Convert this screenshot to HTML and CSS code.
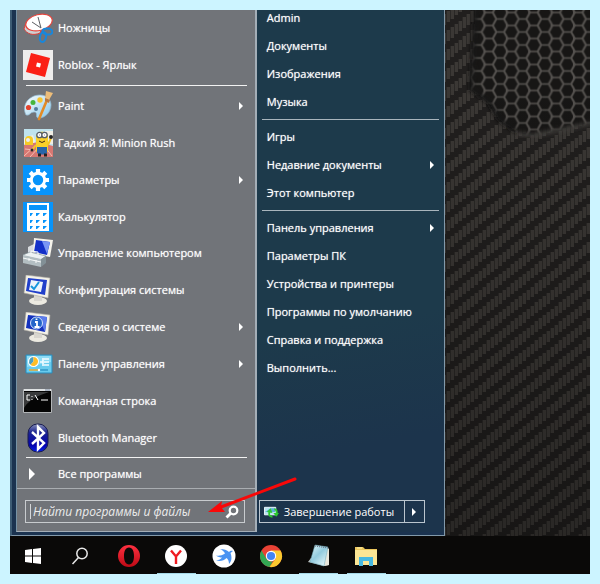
FILE: index.html
```html
<!DOCTYPE html>
<html lang="ru">
<head>
<meta charset="utf-8">
<title>Меню Пуск</title>
<link rel="stylesheet" href="styles.css">
</head>
<body>
<main class="desktop">
  <svg class="wallpaper" aria-hidden="true">
    <defs>
      <linearGradient id="strand"><stop offset="0" stop-color="#302e2c"/><stop offset=".6" stop-color="#403d3a"/><stop offset="1" stop-color="#2c2a28"/></linearGradient>
      <linearGradient id="dim" x2="0" y2="1"><stop offset=".1" stop-color="#000" stop-opacity="0"/><stop offset="1" stop-color="#000" stop-opacity=".32"/></linearGradient>
      <filter id="soft"><feGaussianBlur stdDeviation=".6"/></filter>
      <filter id="edge" x="-20%" y="-20%" width="140%" height="140%"><feGaussianBlur stdDeviation="2"/></filter>
      <pattern id="carbon" width="24" height="19" patternUnits="userSpaceOnUse">
        <path fill="#211f1e" d="M0 0h24v19H0z"/>
        <g fill="#3a3735" filter="url(#soft)">
          <path d="M0 4h4v11H0zM4 1h4v11H4zM8 -2h4v11H8zM8 17h4v11H8zM12 -5h4v10h-4zM12 14h4v11h-4zM16 -8h4v10h-4zM16 11h4v11h-4zM20 7h4v11h-4z"/>
        </g>
        <path d="M.500 4v11M4.500 1v11M8.500 0v9M8.500 17v2M12.500 0v5M12.500 14v5M16.500 0v2M16.500 11v8M20.500 7v11" stroke="#2a2826"/>
      </pattern>
      <pattern id="holes" x="3" y="2.5" width="22.4" height="13" patternUnits="userSpaceOnUse">
        <path fill="#54514e" d="M0 0h23v13H0z"/>
        <g fill="#171615" stroke="#22211f" stroke-width=".6">
          <path d="M2.600 1h6l3 5.500-3 5.500h-6l-3-5.500z"/>
          <path d="M13.800-5.500h6l3 5.500-3 5.500h-6L10.800 0z M13.800 7.500h6l3 5.500-3 5.500h-6l-3-5.500z"/>
          <path d="M25 1h6l3 5.500-3 5.500h-6l-3-5.500z"/>
        </g>
      </pattern>
      <mask id="patch"><path filter="url(#edge)" fill="#fff" d="M468-8l-5 86 17 12 11 18 19 14 14 1 60-12 30-4V-8z"/></mask>
    </defs>
    <rect width="100%" height="100%" fill="url(#carbon)"/>
    <path filter="url(#edge)" fill="none" stroke="#151413" stroke-width="8" d="M468-8l-5 86 17 12 11 18 17 12"/>
    <path filter="url(#edge)" fill="none" stroke="#45433f" stroke-width="4" d="M508 124l16 1 60-13"/>
    <rect width="100%" height="140" fill="url(#holes)" mask="url(#patch)"/>
    <rect width="100%" height="100%" fill="url(#dim)"/>
  </svg>

  <section class="menu" aria-label="Пуск">
    <div class="programs">
      <ul class="list recent">
        <li><a class="item" href="#">
          <svg class="icon" viewBox="0 0 30 30"><path d="M1 16c3 5 9 7 16 4l2-5L3 10z" fill="#cfd0d2" stroke="#e0403a"/><ellipse cx="16" cy="9.500" rx="13.500" ry="8" transform="rotate(-14 16 9.500)" fill="#fff" stroke="#e5443c" stroke-width="1.200"/><path d="M9 9l9 6M15 4l3 11" stroke="#5a5d62" fill="none"/><g fill="none" stroke="#1787dd" stroke-width="2"><ellipse cx="24.500" cy="18.500" rx="5" ry="3" transform="rotate(8 24.500 18.500)"/><ellipse cx="20" cy="24" rx="3" ry="5" transform="rotate(14 20 24)"/></g></svg>
          <span>Ножницы</span></a></li>
        <li><a class="item" href="#">
          <svg class="icon" viewBox="0 0 30 30"><path fill="#efeeed" d="M0 0h30v30H0z"/><path fill="#fb2015" d="M8 3l19 5-5 19-19-5z"/><path fill="#fff" d="M14 12.500l4 1-1 4-4-1z"/></svg>
          <span>Roblox - Ярлык</span></a></li>
      </ul>
      <hr class="rule rule-left">
      <ul class="list pinned">
        <li><a class="item" href="#">
          <svg class="icon" viewBox="0 0 30 30"><defs><linearGradient id="pal" x2="1" y2="1"><stop stop-color="#fff"/><stop offset="1" stop-color="#86c7ea"/></linearGradient></defs><path fill="url(#pal)" stroke="#8fb9d2" stroke-width=".7" d="M3 24C-2 14 6 4 17 4c7 0 11 5 11 10 0 7-6 13-12 13-5 0 0-6-5-6-4 0-4 4-8 3z"/><circle cx="5.500" cy="16.500" r="2.600" fill="#e4442e"/><circle cx="10" cy="11.500" r="2.500" fill="#45b53c"/><circle cx="17" cy="9" r="2.700" fill="#f7c531"/><circle cx="13" cy="18" r="2" fill="#527c9b"/><path d="M16 28l8-19" stroke="#e38b25" stroke-width="2.600" stroke-linecap="round"/><path d="M23 0l7 2-4 7-4-1z" fill="#edbd79"/><path d="M22 7l5 2-1 3-4-2z" fill="#ba7840"/></svg>
          <span>Paint</span><i class="more"></i></a></li>
        <li><a class="item" href="#">
          <svg class="icon" viewBox="0 0 30 30"><path fill="#bfe3ee" d="M1 1h29v28H1z"/><path fill="#f0eee5" d="M1 10l9-3 3 9H1zM22 3h8v13h-8z"/><path fill="#d77772" d="M1 17l14-3 15 4v11H1z"/><path d="M1 28l12-11M7 29l9-10M29 28l-7-9M2 21l9 1" stroke="#f4c0b4" fill="none"/><path fill="#f6cb25" d="M2 12a4 4 0 018 0v5H2z"/><circle cx="5" cy="12" r="2" fill="#eee"/><path fill="#f9d029" d="M13 9c0-7 12-7 12 0v13c0 5-12 5-12 0z"/><path fill="#2765a9" d="M14 19h10v6c-3 2-7 2-10 0z"/><path d="M13 17l-4 5M25 17l3-7" stroke="#f5c622" stroke-width="2"/><circle cx="28" cy="9" r="2" fill="#292829"/><circle cx="9" cy="22" r="1.500" fill="#292829"/><g fill="#fff" stroke="#555e68" stroke-width="1.300"><circle cx="16.500" cy="7" r="2.700"/><circle cx="21.500" cy="7" r="2.700"/></g><path d="M16.500 7h.5M21 7h.5M16 13q3 3 6 0" stroke="#3c2516" fill="none"/><path d="M15 27h3M21 27h3" stroke="#222" stroke-width="3"/></svg>
          <span>Гадкий Я: Minion Rush</span></a></li>
        <li><a class="item" href="#">
          <svg class="icon" viewBox="0 0 30 30"><path fill="#0794fb" d="M0 0h30v30H0z"/><circle cx="15" cy="15" r="6.700" fill="none" stroke="#fff" stroke-width="3"/><g stroke="#fff" stroke-width="4.200"><path d="M15 4v4M15 22v4M4 15h4M22 15h4M7.200 7.200l3 3M19.800 19.800l3 3M7.200 22.800l3-3M19.800 10.200l3-3"/></g></svg>
          <span>Параметры</span><i class="more"></i></a></li>
        <li><a class="item" href="#">
          <svg class="icon" viewBox="0 0 30 30"><path fill="#0794fb" d="M0 0h30v30H0z"/><path fill="#fff" d="M4 1h22v28H4z"/><path fill="#0794fb" d="M6 3h18v5H6zM7 11h3l-2 3H7zM13 11h4l-3 3h-1zM20 11h4l-3 3h-1zM7 18h3l-2 3H7zM13 18h4l-3 3h-1zM20 18h4l-3 3h-1zM7 24h3l-2 3H7zM13 24h4l-3 3h-1zM20 24h4l-3 3h-1z"/></svg>
          <span>Калькулятор</span></a></li>
        <li><a class="item" href="#">
          <svg class="icon" viewBox="0 0 30 30"><path fill="#d9dce0" d="M5 9l6-3v13H5z"/><path fill="#f5f3eb" d="M11 0l19 2-3 17-17-3z"/><path fill="#1430c8" d="M13 2l14 2-3 13-13-3z"/><path fill="#7a96f5" d="M19 3l8 1-3 12z"/><path fill="#eef2f3" stroke="#83949b" stroke-width=".7" d="M0 17l7-3 16 4-5 4-18-4z"/><path fill="#b3bec2" d="M0 17l18 4v8L0 25z"/><path fill="#829096" d="M18 21l5-3v7l-5 4z"/><path d="M8 16v-3l7 1v3M0 20l18 4M6 20v3M13 22v3" stroke="#f7f9f9" fill="none"/></svg>
          <span>Управление компьютером</span></a></li>
        <li><a class="item" href="#">
          <svg class="icon" viewBox="0 0 30 30"><ellipse cx="15" cy="26" rx="9" ry="4" fill="#eceae1"/><path fill="#d8d6cf" d="M11 19h8v7h-8z"/><path fill="#f4f2e8" stroke="#adaaa1" stroke-width=".6" d="M3 0l24 3-2 20L1 18z"/><path fill="#2140ca" d="M5 3l19 2-2 15L3 16z"/><path fill="#edf4fb" d="M8 5l12 2-2 10-12-2z"/><path d="M8 11l3 3 5-7" stroke="#1596dd" stroke-width="2" fill="none"/></svg>
          <span>Конфигурация системы</span></a></li>
        <li><a class="item" href="#">
          <svg class="icon" viewBox="0 0 30 30"><ellipse cx="15" cy="26" rx="9" ry="4" fill="#eceae1"/><path fill="#d8d6cf" d="M11 19h8v7h-8z"/><path fill="#f4f2e8" stroke="#adaaa1" stroke-width=".6" d="M3 0l24 3-2 20L1 18z"/><path fill="#1532bd" d="M5 3l19 2-2 15L3 16z"/><path fill="#5c7cec" d="M15 4l9 1-2 15z"/><circle cx="13.500" cy="11" r="6" fill="#2465c9" stroke="#d2e3ff"/><path d="M13.500 6.500v1.500M12 10h2v5M11.500 15h5" stroke="#fff" stroke-width="1.800" fill="none"/></svg>
          <span>Сведения о системе</span><i class="more"></i></a></li>
        <li><a class="item" href="#">
          <svg class="icon" viewBox="0 0 30 30"><path fill="#69cbed" stroke="#288abb" d="M3 6h26v18H3z"/><path fill="#8edcf6" d="M4 7h24v6L4 18z"/><circle cx="10.500" cy="12.500" r="5.500" fill="#fff"/><path fill="#4b9fc1" d="M10.500 12.500V8a4.500 4.500 0 00-3 7.800z"/><path fill="#ffbd26" d="M10.500 12.500V8a4.500 4.500 0 11-3 7.800z"/><path d="M17 13h3M20 9v8M21 10h5M21 13h5M21 16h5" stroke="#f3fcff" stroke-width="1.600" fill="none"/><path d="M6 21h10" stroke="#f1aa25" stroke-width="1.400"/><path d="M16 21h9" stroke="#197eb2"/><circle cx="16" cy="21" r="1.200" fill="#fff"/></svg>
          <span>Панель управления</span><i class="more"></i></a></li>
        <li><a class="item" href="#">
          <svg class="icon" viewBox="0 0 30 30"><path fill="#050505" stroke="#b2b5b7" d="M.500 3.500h28v23H.500z"/><path fill="#393a3b" d="M1 6h25C17 9 6 13 1 22z"/><path fill="#dfe2e3" d="M1 3h27v2H1z"/><path d="M22 4h5" stroke="#7988a1"/><path d="M7 9H4v5h3M9 10v1M9 13v1M12 9l3 5M18 14h7" stroke="#fff" fill="none"/></svg>
          <span>Командная строка</span></a></li>
        <li><a class="item" href="#">
          <svg class="icon" viewBox="0 0 30 30"><defs><linearGradient id="bt" x2="0" y2="1"><stop stop-color="#8991b6"/><stop offset=".3" stop-color="#1b2391"/><stop offset=".75" stop-color="#0503ad"/><stop offset="1" stop-color="#0722e8"/></linearGradient></defs><rect x="5" y="1" width="20" height="28" rx="9.500" fill="url(#bt)" stroke="#181b50"/><path d="M9 9l12 11-6 6V4l6 6L9 21" fill="none" stroke="#fff" stroke-width="2.400"/></svg>
          <span>Bluetooth Manager</span></a></li>
      </ul>
      <hr class="rule rule-left">
      <a class="all" href="#"><i class="more more-big"></i><span>Все программы</span></a>
      <form class="search-area">
        <label class="search">
          <input type="search" placeholder="Найти программы и файлы" aria-label="Найти программы и файлы">
          <svg class="loupe" viewBox="0 0 14 14"><circle cx="8.500" cy="5.500" r="3.800" fill="none" stroke="#fff" stroke-width="2.200"/><path d="M5.500 8.500L1.500 12.500" stroke="#fff" stroke-width="2.800"/></svg>
        </label>
      </form>
    </div>

    <div class="places">
      <ul class="links">
        <li><a href="#">Admin</a></li>
        <li><a href="#">Документы</a></li>
        <li><a href="#">Изображения</a></li>
        <li><a href="#">Музыка</a></li>
      </ul>
      <hr class="rule">
      <ul class="links">
        <li><a href="#">Игры</a></li>
        <li><a href="#">Недавние документы<i class="more"></i></a></li>
        <li><a href="#">Этот компьютер</a></li>
      </ul>
      <hr class="rule">
      <ul class="links">
        <li><a href="#">Панель управления<i class="more"></i></a></li>
        <li><a href="#">Параметры ПК</a></li>
        <li><a href="#">Устройства и принтеры</a></li>
        <li><a href="#">Программы по умолчанию</a></li>
        <li><a href="#">Справка и поддержка</a></li>
        <li><a href="#">Выполнить...</a></li>
      </ul>
      <div class="power">
        <button class="shutdown" type="button">
          <svg class="update" viewBox="0 0 16 12"><path fill="#b9e3f3" stroke="#eefaff" d="M.500 1h12v8H.500z"/><path fill="#5cb0d6" d="M1 6l6-4h5v4H1z"/><path d="M9 11C5 11 5 8 6 5M11 3c3 0 3 4 2 7" fill="none" stroke="#2bc92e" stroke-width="2"/><path fill="#2bc92e" d="M3 6l4-4 2 5zM10 7h6l-3 4z"/></svg>
          <span>Завершение работы</span>
        </button>
        <button class="power-more" type="button" aria-label="Другие варианты"><i class="more"></i></button>
      </div>
    </div>
  </section>

  <nav class="taskbar" aria-label="Панель задач">
    <div class="tasks">
      <button class="task" type="button" aria-label="Пуск"><svg viewBox="0 0 24 24"><path fill="#fff" d="M3 6l7-1v6.500H3zM11 5l8-1v7.500h-8zM3 12.500h7V19l-7-1zM11 12.500h8V20l-8-1z"/></svg></button>
      <button class="task" type="button" aria-label="Поиск"><svg viewBox="0 0 24 24"><circle cx="13" cy="9.500" r="5.200" fill="none" stroke="#e8e8e8" stroke-width="1.500"/><path d="M9.500 13.500L3.500 20" stroke="#e8e8e8" stroke-width="1.500"/></svg></button>
      <button class="task" type="button" aria-label="Opera"><svg viewBox="0 0 24 24"><defs><linearGradient id="op" x2="0" y2="1"><stop stop-color="#ff3040"/><stop offset="1" stop-color="#bd0a15"/></linearGradient></defs><path fill="url(#op)" fill-rule="evenodd" d="M12 1a11 11 0 100 22 11 11 0 000-22zm0 2.500c3.500 0 5 4 5 8.500s-1.500 8.500-5 8.500S7 16.500 7 12s1.500-8.500 5-8.500z"/></svg></button>
      <button class="task running" type="button" aria-label="Yandex"><svg viewBox="0 0 24 24"><circle cx="12" cy="12" r="11" fill="#fff"/><path d="M7 6.500l5 6 5-6M12 12v8" fill="none" stroke="#ef1a20" stroke-width="2.400"/></svg></button>
      <button class="task" type="button" aria-label="Почтовый клиент"><svg viewBox="0 0 24 24"><circle cx="12" cy="12" r="11.500" fill="#fff"/><path fill="#4a93f2" d="M8 5c4 0 7 1 9 3 1-1 2-1.500 4-1l-2.500 2C20 13 20 17 17 20c0-3-1-5-2.500-6C12 17 8 17.500 4 16.500c3-.5 5-1.500 6-3-2 0-4-.5-6-2 3 .5 6 0 9-2C12 7.500 10.500 6 8 5z"/></svg></button>
      <button class="task" type="button" aria-label="Chrome"><svg viewBox="0 0 24 24"><circle cx="12" cy="12" r="11" fill="#e94235"/><path fill="#32a753" d="M2.500 6.500L7.200 14.500A5.500 5.500 0 0014 17l-3.500 6A11 11 0 012.500 6.500z"/><path fill="#fbca2f" d="M12 6.500h9.500A11 11 0 0110.500 23l6.300-8.500z"/><circle cx="12" cy="12" r="5.200" fill="#fff"/><circle cx="12" cy="12" r="4.100" fill="#4285f4"/></svg></button>
      <button class="task running" type="button" aria-label="Блокнот"><svg viewBox="0 0 24 24"><defs><linearGradient id="nt" x2=".8" y2="1"><stop stop-color="#e2f8fc"/><stop offset=".5" stop-color="#93cbdd"/><stop offset="1" stop-color="#e4f7fa"/></linearGradient></defs><path fill="#c0c4c2" d="M1 18l3-4 17-1 1 8-5 1z"/><path fill="#e9e7dc" d="M20 3l2 2v16l-5 1z"/><path fill="url(#nt)" stroke="#6fabb9" stroke-width=".5" d="M8 1l13 2-4 19-14-4z"/><path d="M8 2l13 2" stroke="#667" stroke-dasharray="1 1"/></svg></button>
      <button class="task running" type="button" aria-label="Проводник"><svg viewBox="0 0 24 24"><path fill="#ecc75e" d="M1 3h8l2 2h12v16H1z"/><path fill="#fbe695" d="M1 6h22v15H1z"/><path d="M3 4h5" stroke="#fff3b0"/><path fill="#46b9e2" d="M5 13h14v9h-4v-5H9v5H5z"/></svg></button>
    </div>
  </nav>

  <svg class="pointer" viewBox="0 0 90 38" aria-hidden="true"><path d="M87 3L13 31" stroke="#f90808" stroke-width="3" stroke-linecap="round"/><path fill="#f90808" d="M0 36l14-11-1 6 4 5z"/></svg>
</main>
</body>
</html>
```
FILE: styles.css
```css
* { box-sizing: border-box; }

body {
  margin: 0;
  min-height: 100vh;
  padding: 10px;
  display: flex;
  background: #ccf4ff;
  color: #fff;
  font: 500 11px/16px "Open Sans", "Noto Sans", sans-serif;
}

a { color: inherit; text-decoration: none; }
ul { margin: 0; padding: 0; list-style: none; }
button { font: inherit; color: inherit; background: none; border: 0; padding: 0; }

.desktop {
  position: relative;
  flex: 1;
  display: flex;
  flex-direction: column;
  overflow: hidden;
  background: #1c1b1a;
}

.wallpaper {
  position: absolute;
  inset: 0;
  width: 100%;
  height: 100%;
}

.menu {
  position: relative;
  flex: 1;
  width: 75%;
  display: flex;
  padding: 0 0 3px 4px;
  border: solid #8299aa;
  border-width: 0 1px 1px 2px;
  border-left-color: #3d5c74;
  background: #1b3350;
  text-shadow: 0 0 1px rgba(255, 255, 255, .7);
}

.programs {
  flex: 240;
  min-width: 0;
  display: flex;
  flex-direction: column;
  border: solid #a4aeb7;
  border-width: 0 2px 1px 1px;
  border-left-color: #7793a5;
  background: #717479;
}

.list { display: flex; flex-direction: column; }
.list li { flex: 1; display: flex; }
.recent { flex: 2; }
.pinned { flex: 10; }

.item {
  flex: 1;
  display: flex;
  align-items: center;
  gap: 5px;
  padding: 0 12px 0 6px;
}

.icon { width: 30px; height: 30px; flex: none; }

.more {
  margin-left: auto;
  border: solid transparent;
  border-width: 4px 0 4px 4px;
  border-left-color: #fff;
}

.more-big { margin: 0; border-width: 6px 0 6px 6px; border-left-color: #fff; }

.rule {
  flex: none;
  width: auto;
  height: 1px;
  margin: 3px 5px;
  border: 0;
  background: #a9b5bd;
}

.rule-left { margin: 1px 8px 2px 9px; background: #f2f2f2; }

.all {
  display: flex;
  align-items: center;
  gap: 23px;
  height: 28px;
  padding-left: 12px;
}

.search-area {
  margin: 0;
  padding: 11px 10px 8px 8px;
  border-top: 1px solid #a9adb1;
}

.search {
  display: flex;
  align-items: center;
  height: 23px;
  padding: 0 5px 0 4px;
  border: 1px solid #c8cbce;
}

.search input {
  flex: 1;
  min-width: 0;
  height: 15px;
  padding: 0 0 0 2px;
  border: 0;
  border-left: 1px solid #d5d7d9;
  background: none;
  color: #fff;
  font: italic 400 12px/15px "Open Sans", "Noto Sans", sans-serif;
}

.search input::placeholder { color: #ececec; opacity: 1; }
.loupe { width: 14px; height: 14px; flex: none; }

.places {
  flex: 189;
  min-width: 0;
  display: flex;
  flex-direction: column;
  margin-top: -6px;
  padding-bottom: 9px;
  background: linear-gradient(170deg, #1d3a4b 0%, #1d3a4b 60%, #1c344c 82%);
}

.links a {
  display: flex;
  align-items: center;
  height: 28px;
  padding: 0 10px;
}

.power {
  display: flex;
  height: 23px;
  margin: auto 19px 0 2px;
  border: 1px solid #bac5ce;
}

.shutdown {
  flex: 1;
  display: flex;
  align-items: center;
  gap: 5px;
  padding-left: 4px;
  white-space: nowrap;
}

.update { width: 15px; height: 12px; flex: none; }

.power-more {
  width: 20px;
  display: flex;
  align-items: center;
  padding-right: 8px;
  border-left: 1px solid #bac5ce;
}

.taskbar {
  position: relative;
  height: 38px;
  background: #0a0908;
}

.tasks { display: flex; width: 380px; height: 100%; }

.task {
  flex: 1;
  display: flex;
  flex-direction: column;
  align-items: center;
  justify-content: center;
  padding-top: 2px;
}

.task svg { width: 24px; height: 24px; }

.running {
  background: linear-gradient(#a5d8e6, #a5d8e6) bottom / 39px 1px no-repeat;
}

.pointer {
  position: absolute;
  left: 198px;
  bottom: 60px;
  width: 90px;
  height: 38px;
}
```
